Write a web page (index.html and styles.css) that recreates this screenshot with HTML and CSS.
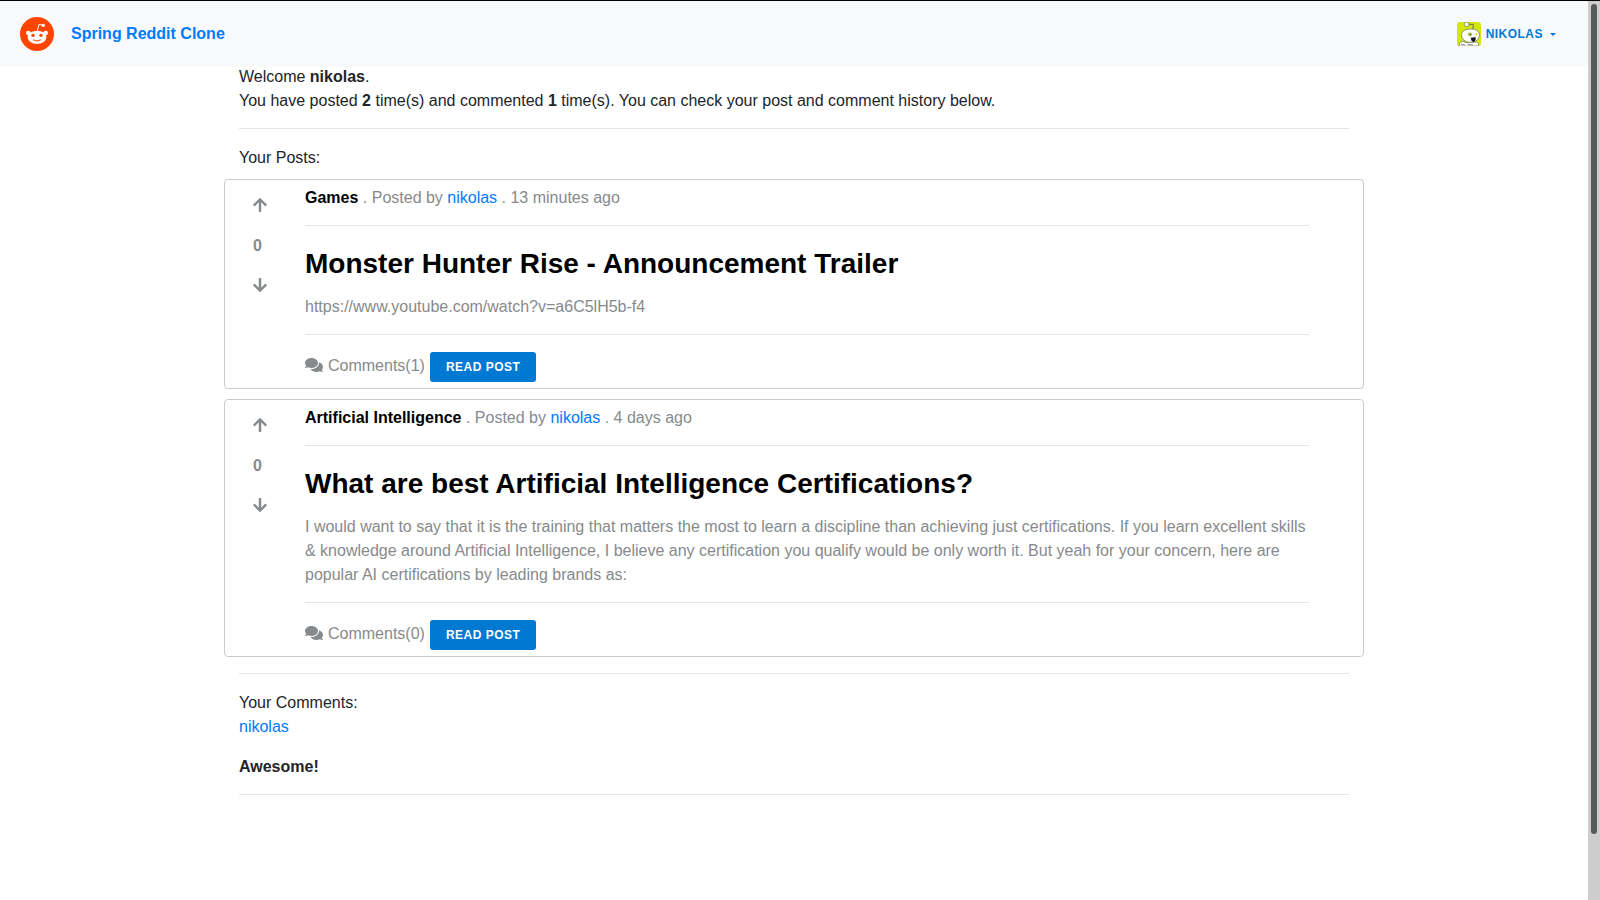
FILE: index.html
```html
<!DOCTYPE html>
<html lang="en">
<head>
<meta charset="utf-8">
<title>Spring Reddit Clone</title>
<link rel="stylesheet" href="styles.css">
</head>
<body>
<svg class="sprite" aria-hidden="true">
  <symbol id="arrow-up" viewBox="0 0 448 512"><path d="M34.9 289.5l-22.2-22.2c-9.4-9.4-9.4-24.6 0-33.9L207 39c9.4-9.4 24.6-9.4 33.9 0l194.3 194.3c9.4 9.4 9.4 24.6 0 33.9L413 289.4c-9.5 9.5-25 9.3-34.3-.4L264 168.6V456c0 13.3-10.7 24-24 24h-32c-13.3 0-24-10.7-24-24V168.6L69.2 289.1c-9.3 9.8-24.8 10-34.3.4z"/></symbol>
  <symbol id="arrow-down" viewBox="0 0 448 512"><path d="M413.1 222.5l22.2 22.2c9.4 9.4 9.4 24.6 0 33.9L241 473c-9.4 9.4-24.6 9.4-33.9 0L12.7 278.6c-9.4-9.4-9.4-24.6 0-33.9l22.2-22.2c9.5-9.5 25-9.3 34.3.4L184 343.4V56c0-13.3 10.7-24 24-24h32c13.3 0 24 10.7 24 24v287.4l114.8-120.5c9.3-9.8 24.8-10 34.3-.4z"/></symbol>
  <symbol id="comments" viewBox="0 0 576 512"><path d="M416 192c0-88.4-93.1-160-208-160S0 103.6 0 192c0 34.3 14.1 65.9 38 92-13.4 30.2-35.5 54.2-35.8 54.5-2.2 2.3-2.8 5.7-1.5 8.7S4.8 352 8 352c36.6 0 66.9-12.3 88.7-25 32.2 15.7 70.3 25 111.3 25 114.9 0 208-71.6 208-160zm122 220c23.9-26 38-57.7 38-92 0-66.9-53.5-124.2-129.3-148.1.9 6.6 1.3 13.3 1.3 20.1 0 105.9-107.7 192-240 192-10.8 0-21.3-.8-31.7-1.9C207.8 439.6 281.8 480 368 480c41 0 79.1-9.2 111.3-25 21.8 12.7 52.1 25 88.7 25 3.2 0 6.1-1.9 7.3-4.8 1.3-2.9.7-6.3-1.5-8.7-.3-.3-22.4-24.2-35.8-54.5z"/></symbol>
</svg>
<div class="page">
  <header class="header">
    <a class="brand" href="#">
      <svg class="logo" viewBox="0 0 102 102" aria-hidden="true">
        <circle cx="51" cy="51" r="51" fill="#ff4500"/>
        <g fill="#fff">
          <circle cx="25" cy="48" r="7"/><circle cx="77" cy="48" r="7"/>
          <ellipse cx="51" cy="61" rx="28" ry="20"/>
          <circle cx="70" cy="25" r="5"/>
        </g>
        <path d="M52 42L57 22L70 25" fill="none" stroke="#fff" stroke-width="3"/>
        <circle cx="39" cy="55" r="5" fill="#ff4500"/><circle cx="63" cy="55" r="5" fill="#ff4500"/>
        <path d="M40 69q11 7 22 0" fill="none" stroke="#ff4500" stroke-width="3" stroke-linecap="round"/>
      </svg>
      <span>Spring Reddit Clone</span>
    </a>
    <button class="account" type="button">
      <svg class="avatar" viewBox="0 0 72 72" aria-hidden="true">
        <rect width="72" height="72" rx="9" fill="#d2e80c"/>
        <g fill="#fff" stroke="#666a4c" stroke-width="2">
          <path d="M35 7L49 7L48 22" fill="none" stroke-width="3"/>
          <circle cx="29" cy="7" r="7"/>
          <path d="M6 72C6 62 12 57 20 58L26 62L56 60C64 60 66 66 64 72Z"/>
          <path d="M14 38C14 26 28 21 42 21C56 21 67 27 67 38C67 52 56 61 42 61C24 61 14 52 14 38Z"/>
        </g>
        <circle cx="39" cy="37" r="5" fill="#c4d800" stroke="#5c6420" stroke-width="1"/>
        <circle cx="40" cy="37" r="2" fill="#333"/>
        <circle cx="58" cy="36" r="3" fill="#c4d800"/>
        <path d="M41 47L56 46Q57 59 49 60Q42 57 41 47Z" fill="#111"/>
        <path d="M12 66l12 3M32 67l16 2" stroke="#555" stroke-width="2"/>
      </svg>
      <span class="account-name">NIKOLAS</span>
      <span class="caret"></span>
    </button>
  </header>

  <main class="container">
    <div>Welcome <b>nikolas</b>.</div>
    <div>You have posted <b>2</b> time(s) and commented <b>1</b> time(s). You can check your post and comment history below.</div>
    <hr>
    <div>Your Posts:</div>

    <article class="post">
      <div class="votes">
        <button class="vote" type="button" aria-label="Upvote"><svg class="arrow"><use href="#arrow-up"/></svg></button>
        <b class="count">0</b>
        <button class="vote" type="button" aria-label="Downvote"><svg class="arrow"><use href="#arrow-down"/></svg></button>
      </div>
      <div class="post-body">
        <div><b class="subreddit">Games</b> . Posted by <a href="#">nikolas</a> . 13 minutes ago</div>
        <hr>
        <h2 class="title">Monster Hunter Rise - Announcement Trailer</h2>
        <p class="text">https://www.youtube.com/watch?v=a6C5lH5b-f4</p>
        <hr>
        <div class="actions">
          <span class="comments"><svg class="bubbles" aria-hidden="true"><use href="#comments"/></svg>Comments(1)</span>
          <button class="read" type="button">READ POST</button>
        </div>
      </div>
    </article>

    <article class="post">
      <div class="votes">
        <button class="vote" type="button" aria-label="Upvote"><svg class="arrow"><use href="#arrow-up"/></svg></button>
        <b class="count">0</b>
        <button class="vote" type="button" aria-label="Downvote"><svg class="arrow"><use href="#arrow-down"/></svg></button>
      </div>
      <div class="post-body">
        <div><b class="subreddit">Artificial Intelligence</b> . Posted by <a href="#">nikolas</a> . 4 days ago</div>
        <hr>
        <h2 class="title">What are best Artificial Intelligence Certifications?</h2>
        <p class="text">I would want to say that it is the training that matters the most to learn a discipline than achieving just certifications. If you learn excellent skills &amp; knowledge around Artificial Intelligence, I believe any certification you qualify would be only worth it. But yeah for your concern, here are popular AI certifications by leading brands as:</p>
        <hr>
        <div class="actions">
          <span class="comments"><svg class="bubbles" aria-hidden="true"><use href="#comments"/></svg>Comments(0)</span>
          <button class="read" type="button">READ POST</button>
        </div>
      </div>
    </article>

    <hr>
    <div>Your Comments:</div>
    <div><a href="#">nikolas</a></div>
    <p class="comment"><b>Awesome!</b></p>
    <hr>
  </main>
</div>
<div class="rail"><div class="thumb"></div></div>
</body>
</html>
```

FILE: styles.css
```css
* { box-sizing: border-box; }
body {
  margin: 0;
  min-height: 100vh;
  display: flex;
  border-top: 1px solid #000;
  background: #fff;
  color: #212529;
  font: 16px/24px "Liberation Sans", Arial, sans-serif;
}
a { color: #007bff; text-decoration: none; }
button { margin: 0; padding: 0; border: 0; background: none; color: inherit; font: inherit; cursor: pointer; }
hr { margin: 15px 0 17px; border: 0; border-top: 1px solid #e5e5e5; }
.sprite { display: none; }
.page { flex: 1; min-width: 0; }

.header {
  height: 66px;
  margin-bottom: -2px;
  padding: 0 32px 0 20px;
  display: flex;
  align-items: center;
  justify-content: space-between;
  background: #f8f9fa;
}
.brand { display: flex; align-items: center; gap: 17px; font-weight: bold; }
.logo { width: 34px; height: 34px; }
.account {
  display: flex;
  align-items: center;
  gap: 5px;
  color: #0079d3;
  font-size: 12px;
  font-weight: bold;
  letter-spacing: 0.04em;
}
.avatar { width: 24px; height: 24px; }
.caret { margin-left: 2px; border: 3px solid transparent; border-top-color: currentColor; border-bottom: 0; }

.container { max-width: 1140px; margin: 0 auto; padding: 0 15px; }
.post {
  display: flex;
  margin: 9px -15px 10px;
  padding: 6px 54px 6px 0;
  border: 1px solid #ccc;
  border-radius: 4px;
  color: #878a8c;
}
.post + hr { margin-top: 16px; }
.votes {
  flex: 0 0 80px;
  padding: 7px 0 0 28px;
  display: flex;
  flex-direction: column;
  align-items: flex-start;
  gap: 15px;
}
.vote { display: flex; align-items: center; height: 24px; }
.count { padding-top: 2px; }
.arrow { width: 14px; height: 16px; fill: currentColor; }
.post-body { flex: 1; min-width: 0; }
.subreddit, .title { color: #000; }
.title { margin: 0 0 10px; font-size: 28px; line-height: 42px; font-weight: bold; }
.text { margin: 0; }
.actions { display: flex; align-items: flex-start; gap: 5px; }
.comments { display: flex; align-items: center; gap: 5px; padding-top: 2px; }
.bubbles { width: 18px; height: 16px; margin-bottom: 2px; fill: currentColor; }
.read {
  height: 30px;
  padding: 0 16px;
  border-radius: 3px;
  background: #0079d3;
  color: #fff;
  font-size: 12px;
  font-weight: bold;
  letter-spacing: 0.04em;
}
.comment { margin: 16px 0 15px; }

.rail { flex: 0 0 12px; padding: 3px 3px 0 2px; border-left: 1px solid #d3cdc5; background: #cdcdcd; }
.thumb { height: 830px; max-height: 93vh; border-radius: 3px; background: #555b5a; }
```
